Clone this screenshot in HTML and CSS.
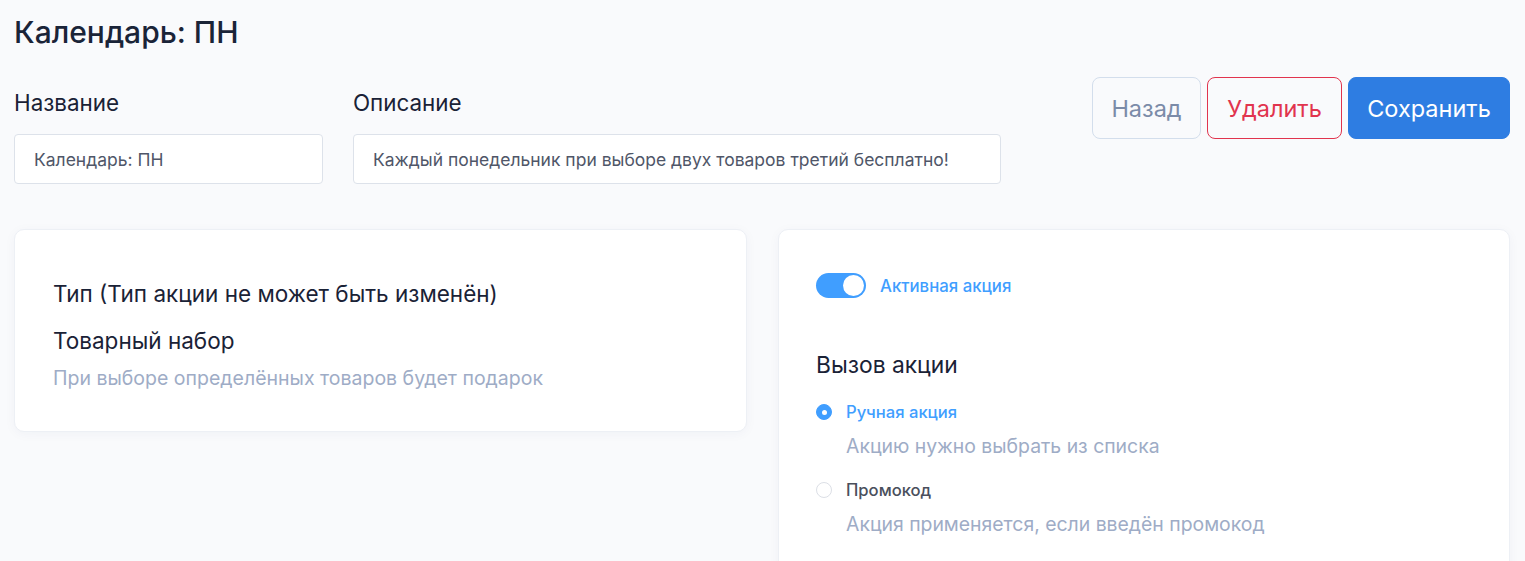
FILE: index.html
```html
<!DOCTYPE html>
<html lang="ru">
<head>
<meta charset="utf-8">
<title>Календарь: ПН</title>
<link rel="stylesheet" href="styles.css">
</head>
<body>
<div class="page">
  <h1 class="title">Календарь: ПН</h1>
  <div class="top-row">
    <div class="field field-name">
      <label class="field-label">Название</label>
      <div class="input">Календарь: ПН</div>
    </div>
    <div class="field field-desc">
      <label class="field-label">Описание</label>
      <div class="input">Каждый понедельник при выборе двух товаров третий бесплатно!</div>
    </div>
    <div class="actions">
      <button class="btn btn-back">Назад</button>
      <button class="btn btn-delete">Удалить</button>
      <button class="btn btn-save">Сохранить</button>
    </div>
  </div>
  <div class="cards">
    <div class="card card-left">
      <div class="card-heading">Тип (Тип акции не может быть изменён)</div>
      <div class="type-name">Товарный набор</div>
      <div class="muted">При выборе определённых товаров будет подарок</div>
    </div>
    <div class="card card-right">
      <div class="switch-row">
        <span class="switch"><span class="knob"></span></span>
        <span class="switch-label">Активная акция</span>
      </div>
      <div class="section-title">Вызов акции</div>
      <div class="radio-item">
        <div class="radio-line">
          <span class="radio checked"></span>
          <span class="radio-label active">Ручная акция</span>
        </div>
        <div class="radio-desc muted">Акцию нужно выбрать из списка</div>
      </div>
      <div class="radio-item">
        <div class="radio-line">
          <span class="radio"></span>
          <span class="radio-label">Промокод</span>
        </div>
        <div class="radio-desc muted">Акция применяется, если введён промокод</div>
      </div>
    </div>
  </div>
</div>
</body>
</html>
```

FILE: styles.css
```css
* { box-sizing: border-box; }
html, body { margin: 0; padding: 0; }
body {
  background: #f9fafc;
  font-family: Inter, "Noto Sans", "DejaVu Sans", sans-serif;
  color: #1a2236;
}
.page {
  padding: 12px 15px 0 14px;
}
.title {
  margin: 0;
  font-size: 30px;
  font-weight: 500;
  line-height: 40px;
  color: #1a2438;
}
.top-row {
  display: flex;
  align-items: flex-start;
  margin-top: 25px;
}
.field { display: flex; flex-direction: column; }
.field-name { width: 309px; }
.field-desc { width: 648px; margin-left: 30px; }
.field-label {
  font-size: 22.4px;
  line-height: 28px;
  height: 28px;
  color: #1a2236;
  margin-top: 12px;
}
.input {
  margin-top: 17px;
  height: 50px;
  border: 1px solid #dde2ea;
  border-radius: 4px;
  background: #fff;
  padding: 0 19px;
  display: flex;
  align-items: center;
  font-size: 17.5px;
  color: #4f5668;
}
.actions {
  margin-left: auto;
  display: flex;
  gap: 6px;
}
.btn {
  height: 62px;
  border-radius: 8px;
  font-family: inherit;
  font-size: 23.5px;
  padding: 0;
  background: transparent;
  border: 1px solid;
  cursor: pointer;
}
.btn-back { width: 109px; color: #7b8ba8; border-color: #d3deec; }
.btn-delete { width: 135px; color: #e1344e; border-color: #e1344e; }
.btn-save { width: 162px; color: #fff; background: #2e7de2; border-color: #2e7de2; }
.cards {
  display: grid;
  grid-template-columns: 733px 732px;
  column-gap: 31px;
  margin-top: 45px;
  align-items: start;
}
.card {
  background: #fff;
  border: 1px solid #edf0f5;
  border-radius: 10px;
  box-shadow: 0 2px 12px rgba(30, 50, 90, 0.04);
}
.card-left {
  padding: 49px 38px 40px 38px;
}
.card-heading {
  font-size: 22.5px;
  line-height: 30px;
  color: #1a2236;
}
.type-name {
  font-size: 22.5px;
  line-height: 30px;
  margin-top: 17px;
  color: #1a2236;
}
.muted {
  color: #9eacc6;
  font-size: 19.5px;
  line-height: 26px;
}
.card-left .muted { margin-top: 9px; }
.card-right {
  padding: 43px 37px 40px 37px;
  min-height: 340px;
}
.switch-row {
  display: flex;
  align-items: center;
  gap: 14px;
  height: 25px;
}
.switch {
  width: 50px;
  height: 25px;
  border-radius: 13px;
  background: #409eff;
  position: relative;
  display: inline-block;
  flex: none;
}
.knob {
  position: absolute;
  right: 2px;
  top: 2px;
  width: 21px;
  height: 21px;
  border-radius: 50%;
  background: #fff;
}
.switch-label {
  color: #409eff;
  font-size: 16.8px;
  font-weight: 500;
}
.section-title {
  font-size: 22.8px;
  line-height: 30px;
  margin-top: 52px;
  color: #1a2236;
}
.radio-item { margin-top: 21px; }
.radio-item + .radio-item { margin-top: 20px; }
.radio-line {
  display: flex;
  align-items: center;
  gap: 14px;
  height: 22px;
}
.radio {
  width: 16px;
  height: 16px;
  border-radius: 50%;
  border: 1px solid #dcdfe6;
  background: #fff;
  position: relative;
  flex: none;
}
.radio.checked {
  background: #409eff;
  border-color: #409eff;
}
.radio.checked::after {
  content: "";
  position: absolute;
  left: 50%;
  top: 50%;
  width: 5px;
  height: 5px;
  margin: -2.5px 0 0 -2.5px;
  border-radius: 50%;
  background: #fff;
}
.radio-label {
  font-size: 16.6px;
  font-weight: 500;
  color: #4a4f5c;
}
.radio-label.active { color: #409eff; }
.radio-desc {
  margin-left: 30px;
  margin-top: 10px;
  font-size: 19.4px;
}
```
